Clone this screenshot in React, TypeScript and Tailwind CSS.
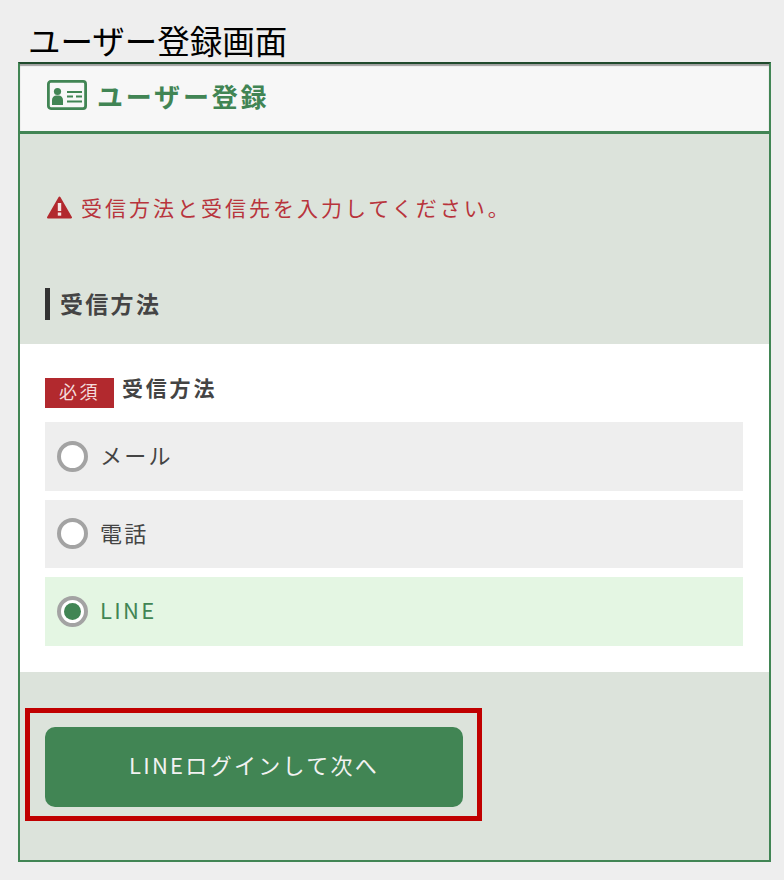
const FONT = "font-['Noto_Sans_CJK_JP','Noto_Sans',sans-serif]"

function IdCardIcon() {
  return (
    <svg width="40" height="30" viewBox="0 0 40 30" className="text-[#418554]">
      <rect x="1.4" y="1.4" width="37.2" height="27.2" rx="2.5" fill="none" stroke="currentColor" strokeWidth="2.8" />
      <circle cx="10.5" cy="11.5" r="3.6" fill="currentColor" />
      <path d="M5 25v-5a4.5 4.5 0 0 1 4.5-4.5h2A4.5 4.5 0 0 1 16 20v5z" fill="currentColor" />
      <path d="M20 11h15v2H20zM20 15.5h6v2h-6zM29 15.5h6v2h-6zM20 20.5h15v2H20z" fill="currentColor" />
    </svg>
  )
}

function AlertIcon() {
  return (
    <svg width="25" height="23" viewBox="0 0 25 23">
      <path d="M12.5 1.5 L24 21.5 H1 Z" fill="#b2292e" stroke="#b2292e" strokeWidth="2" strokeLinejoin="round" />
      <rect x="10.8" y="7" width="3.4" height="8" fill="#f4e4e4" />
      <rect x="10.8" y="16.5" width="3.4" height="3.2" fill="#f4e4e4" />
    </svg>
  )
}

function RadioOption({ label, checked }: { label: string; checked?: boolean }) {
  return (
    <div className={`flex items-center h-[68.5px] pl-[12px] ${checked ? 'bg-[#e4f6e3] text-[#418554]' : 'bg-[#eeeeee] text-[#444444]'}`}>
      <span className="w-[31px] h-[31px] rounded-full border-[4px] border-[#a3a3a3] bg-white flex items-center justify-center shrink-0">
        {checked && <span className="w-[17px] h-[17px] rounded-full bg-[#418554]" />}
      </span>
      <span className="ml-[12px] pb-[4px] text-[22px] tracking-[2.3px] leading-none">{label}</span>
    </div>
  )
}

export default function App() {
  return (
    <div className={`w-[784px] h-[880px] bg-[#eeeeee] overflow-hidden ${FONT}`}>
      <h1 className="pl-[28px] h-[62px] pt-[18px] text-[32.5px] leading-[44px] text-black font-normal whitespace-nowrap">
        ユーザー登録画面
      </h1>
      <div className="relative mx-[18px] w-[753px] h-[800px] border-2 border-[#418554] border-t-[#1f4a2c] bg-[#dce3db]">
        <header className="flex items-center h-[70px] pl-[27px] pb-[5px] bg-[#f7f7f7] border-b-[3px] border-[#418554] shadow-[inset_0_2px_1px_#a0a0a0]">
          <IdCardIcon />
          <span className="ml-[10px] text-[26px] font-bold tracking-[2.8px] text-[#418554]">ユーザー登録</span>
        </header>

        <div className="h-[210px] px-[25px]">
          <div className="flex items-center pt-[58px] pl-[2px]">
            <AlertIcon />
            <span className="ml-[9px] text-[21px] tracking-[3px] leading-[30px] text-[#b8343c]">
              受信方法と受信先を入力してください。
            </span>
          </div>
          <div className="mt-[66px] flex items-center h-[32px] border-l-[5px] border-[#333333] pl-[10px]">
            <span className="pb-[2px] text-[23px] font-bold tracking-[2.3px] text-[#444444]">受信方法</span>
          </div>
        </div>

        <section className="h-[328px] bg-white px-[25px] pt-[30px]">
          <div className="flex items-start h-[48px]">
            <span className="w-[69px] h-[30px] mt-[4px] pb-[3px] bg-[#b2292e] text-[#f4dcdc] text-[18px] tracking-[2.5px] flex items-center justify-center">
              必須
            </span>
            <span className="ml-[8px] -mt-[2px] text-[21px] font-bold tracking-[2.8px] leading-[30px] text-[#444444]">受信方法</span>
          </div>
          <div className="flex flex-col gap-[9px] w-[698px]">
            <RadioOption label="メール" />
            <RadioOption label="電話" />
            <RadioOption label="LINE" checked />
          </div>
        </section>

        <div className="px-[25px] pt-[55px]">
          <button className="w-[418px] h-[80px] pb-[6px] rounded-[10px] bg-[#418554] text-[#f2f2f2] text-[22px] tracking-[2.3px] flex items-center justify-center">
            LINEログインして次へ
          </button>
        </div>

        {/* annotation frame over the button */}
        <div className="absolute left-[5px] top-[644px] w-[457px] h-[113px] border-[5px] border-[#c00000]" />
      </div>
    </div>
  )
}
